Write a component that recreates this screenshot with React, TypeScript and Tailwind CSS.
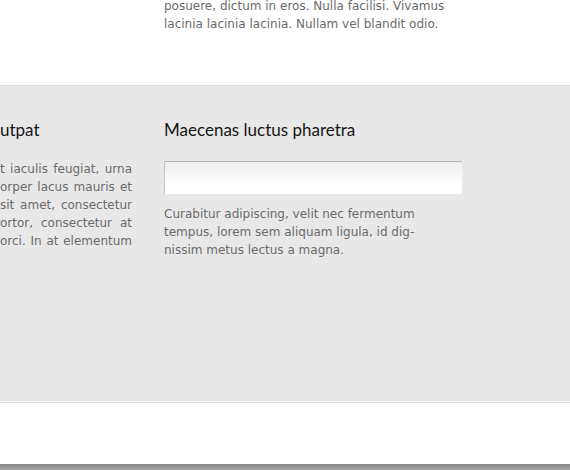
const bodyFont = "font-['DejaVu_Sans',Verdana,sans-serif]";
const headFont = "font-['Lato','Open_Sans',sans-serif]";

const leftLines = [
  "t iaculis feugiat, urna",
  "orper lacus mauris et",
  "sit amet, consectetur",
  "ortor, consectetur at",
  "orci. In at elementum",
];

export default function App() {
  return (
    <div className={`h-[470px] w-[570px] overflow-hidden bg-white ${bodyFont}`}>
      {/* tail of the previous block */}
      <div className="flex h-[85px] gap-8">
        <div className="w-[132px] shrink-0" />
        <p className="-mt-[3px] w-[298px] text-[12px] leading-[18px] text-[#6b6b6b]">
          posuere, dictum in eros. Nulla facilisi. Vivamus
          <br />
          lacinia lacinia lacinia. Nullam vel blandit odio.
        </p>
      </div>

      {/* gray band */}
      <div className="h-[316px] border-t border-[#dcdcdc] bg-[#e8e8e8]">
        <div className="flex gap-8 pt-[34px]">
          <div className="w-[132px] shrink-0">
            <h3 className={`${headFont} text-[17px] leading-[20px] text-[#161616]`}>utpat</h3>
            <div className="mt-[20px] text-[12px] leading-[18px] text-[#6b6b6b]">
              {leftLines.map((line) => (
                <span key={line} className="block whitespace-nowrap text-justify [text-align-last:justify]">
                  {line}
                </span>
              ))}
            </div>
          </div>

          <div className="w-[298px] shrink-0">
            <h3 className={`${headFont} text-[17px] leading-[20px] text-[#161616]`}>
              Maecenas luctus pharetra
            </h3>
            <input
              type="text"
              className="mt-[21px] block h-[33px] w-[298px] border-l border-t border-l-[#c4c4c4] border-t-[#b3b3b3] bg-gradient-to-b from-[#ededed] to-white to-70% outline-none"
            />
            <p className="mt-[11px] text-[12px] leading-[18px] text-[#6b6b6b]">
              Curabitur adipiscing, velit nec fermentum
              <br />
              tempus, lorem sem aliquam ligula, id dig-
              <br />
              nissim metus lectus a magna.
            </p>
          </div>
        </div>
      </div>

      {/* footer */}
      <div className="h-px bg-[#f6f6f6]" />
      <div className="h-px bg-[#dcdcdc]" />
      <div className="h-[61px] bg-white" />
      <div className="h-[6px] bg-gradient-to-b from-[#858585] to-[#a8a8a8]" />
    </div>
  );
}
